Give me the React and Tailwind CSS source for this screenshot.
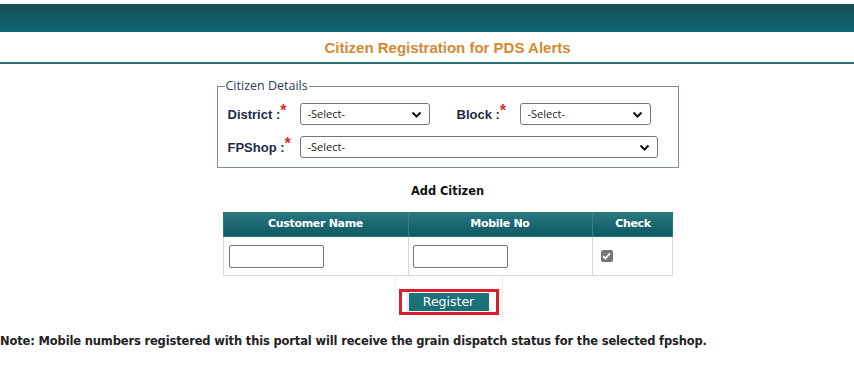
import React from "react";

function Select({ className }) {
  return (
    <div className={`relative flex items-center h-[22px] border border-[#767676] rounded-[3px] bg-white ${className}`}>
      <span className="pl-[7px] text-[11px] text-[#222] font-['Open_Sans',sans-serif]">-Select-</span>
      <svg className="absolute right-[7px] top-[7px]" width="11" height="8" viewBox="0 0 11 8">
        <path d="M1.5 1.5 L5.5 5.5 L9.5 1.5" fill="none" stroke="#111" strokeWidth="2" />
      </svg>
    </div>
  );
}

function Label({ children, className = "" }) {
  return (
    <span className={`font-['Liberation_Sans',sans-serif] font-bold text-[13px] text-[#1e2a47] ${className}`}>
      {children}
      <span className="text-[#e32626] text-[16px] relative top-[-3px]">*</span>
    </span>
  );
}

export default function App() {
  return (
    <div className="w-[854px] h-[370px] bg-white overflow-hidden relative">
      <div className="h-[4px] bg-white" />
      <div className="h-[28px] bg-gradient-to-b from-[#1a4f58] via-[#145a64] to-[#0f6873]" />
      <div className="w-[895px]">
        <div className="h-[32px] border-b-2 border-[#2f6f78] flex items-center justify-center">
          <span className="font-['Liberation_Sans',sans-serif] font-bold text-[15px] text-[#d38a33] mt-[2px]">
            Citizen Registration for PDS Alerts
          </span>
        </div>

        <div className="flex justify-center mt-[15px]">
          <fieldset className="w-[462px] h-[89px] border border-[#7c8b96] pl-[10px] pr-[18px] pt-0 pb-0">
            <legend className="px-[1px] ml-[-3px] font-['Open_Sans',sans-serif] text-[12.5px] text-[#2b3b5a] leading-[14px]">
              Citizen Details
            </legend>
            <div className="flex items-center mt-[9px]">
              <Label className="w-[72px]">District :</Label>
              <Select className="w-[130px]" />
              <Label className="ml-[27px] w-[63px]">Block :</Label>
              <Select className="w-[131px]" />
            </div>
            <div className="flex items-center mt-[9px]">
              <Label className="w-[72px]">FPShop :</Label>
              <Select className="w-[358px]" />
            </div>
          </fieldset>
        </div>

        <div className="text-center mt-[15px] font-['DejaVu_Sans',sans-serif] font-bold text-[11.4px] text-[#111]">
          Add Citizen
        </div>

        <div className="flex justify-center mt-[12px]">
          <div className="w-[450px]">
            <div className="grid grid-cols-[185px_184px_81px] h-[25px] bg-gradient-to-b from-[#2a7680] to-[#0c5a64] border border-[#2a7680] font-['DejaVu_Sans',sans-serif] font-bold text-[11px] tracking-[-0.3px] text-white">
              <div className="flex items-center justify-center border-r border-[#3c8189]">Customer Name</div>
              <div className="flex items-center justify-center border-r border-[#3c8189]">Mobile No</div>
              <div className="flex items-center justify-center">Check</div>
            </div>
            <div className="grid grid-cols-[185px_184px_81px] h-[39px] border border-t-0 border-[#d8d8d8]">
              <div className="flex items-center pl-[5px] border-r border-[#d8d8d8]">
                <div className="w-[95px] h-[23px] border border-[#767676] rounded-[2px] bg-white" />
              </div>
              <div className="flex items-center pl-[4px] border-r border-[#d8d8d8]">
                <div className="w-[95px] h-[23px] border border-[#767676] rounded-[2px] bg-white" />
              </div>
              <div className="flex items-center pl-[8px]">
                <div className="w-[12px] h-[12px] rounded-[2px] bg-[#767676] flex items-center justify-center">
                  <svg width="9" height="8" viewBox="0 0 9 8">
                    <path d="M1 4.2 L3.4 6.4 L8 1.4" fill="none" stroke="#fff" strokeWidth="1.8" />
                  </svg>
                </div>
              </div>
            </div>
          </div>
        </div>

        <div className="flex justify-center">
          <div className="ml-[2px] flex justify-center border-l border-r border-[#f0f0f0] w-[108px] pt-[13px] pb-[8px]">
            <div className="border-[3px] border-[#d9202a] w-[100px] h-[26px] flex items-center pl-[4px]">
              <div className="w-[83px] h-[18px] bg-gradient-to-b from-[#1f727c] to-[#1a6e78] border-l-[3px] border-[#e8f0f0] flex items-center justify-center font-['DejaVu_Sans',sans-serif] text-[12.5px] text-white">
                Register
              </div>
            </div>
          </div>
        </div>

        <div className="mt-[10px] font-['DejaVu_Sans',sans-serif] font-bold text-[11.5px] tracking-[-0.15px] text-[#222] whitespace-nowrap">
          Note: Mobile numbers registered with this portal will receive the grain dispatch status for the selected fpshop.
        </div>
      </div>
    </div>
  );
}
